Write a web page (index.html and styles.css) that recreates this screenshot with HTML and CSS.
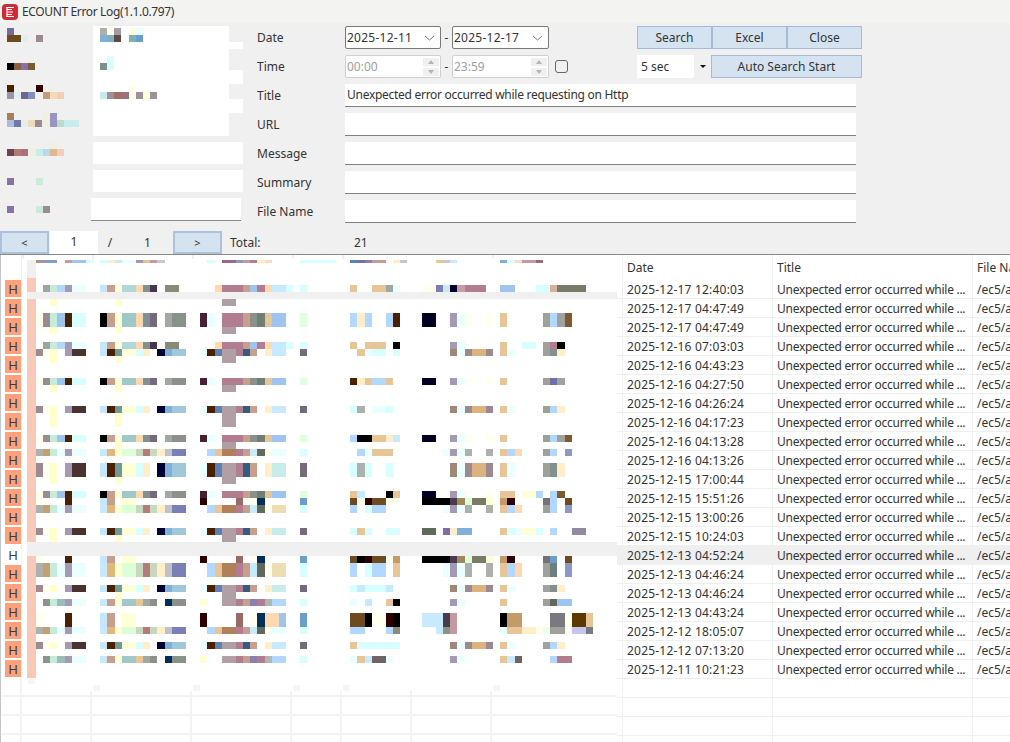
FILE: index.html
```html
<!DOCTYPE html>
<html>
<head>
  <title>ECOUNT Error Log</title>
  <link rel="stylesheet" href="styles.css">
</head>
<body>
  <div class="titlebar">
    <svg class="app-icon" width="16" height="16" viewBox="0 0 16 16">
      <rect x="0" y="0" width="16" height="16" rx="4" fill="#cf2a36"/>
      <path d="M4 3.5h8M5 5.5h5M5 8h6M5 10.5h5M4 12.5h8M5 3.5v9" stroke="#fff" stroke-width="1.2" fill="none"/>
    </svg>
    <span>ECOUNT Error Log(1.1.0.797)</span>
  </div>

  <div class="filters">
    <div class="side">
      <svg id="sideMosaic" class="side-mosaic" width="257" height="200" viewBox="0 26 257 200" shape-rendering="crispEdges"></svg>
      <div class="side-box"></div>
      <div class="side-box"></div>
      <div class="side-box side-box-last"></div>
    </div>
    <div class="filter-main">
      <div class="filter-row">
        <label class="filter-label">Date</label>
        <div class="combo">
          <span class="date-text">2025-12-11</span>
          <svg class="chevron" width="11" height="6" viewBox="0 0 11 6"><path d="M1 1l4.5 4L10 1" fill="none" stroke="#777"/></svg>
        </div>
        <span class="dash">-</span>
        <div class="combo combo-wide">
          <span class="date-text">2025-12-17</span>
          <svg class="chevron" width="11" height="6" viewBox="0 0 11 6"><path d="M1 1l4.5 4L10 1" fill="none" stroke="#777"/></svg>
        </div>
        <div class="btn-group">
          <button class="btn">Search</button>
          <button class="btn">Excel</button>
          <button class="btn">Close</button>
        </div>
      </div>
      <div class="filter-row">
        <label class="filter-label">Time</label>
        <div class="combo combo-off">
          <span>00:00</span>
          <div class="spin"><i class="spin-up"></i><i class="spin-down"></i></div>
        </div>
        <span class="dash">-</span>
        <div class="combo combo-wide combo-off">
          <span>23:59</span>
          <div class="spin"><i class="spin-up"></i><i class="spin-down"></i></div>
        </div>
        <div class="check"></div>
        <div class="interval">
          <span class="interval-text">5 sec</span>
          <span class="interval-arrow"><i></i></span>
        </div>
        <button class="btn btn-auto">Auto Search Start</button>
      </div>
      <div class="filter-row">
        <label class="filter-label">Title</label>
        <div class="field">Unexpected error occurred while requesting on Http</div>
      </div>
      <div class="filter-row">
        <label class="filter-label">URL</label>
        <div class="field"></div>
      </div>
      <div class="filter-row">
        <label class="filter-label">Message</label>
        <div class="field"></div>
      </div>
      <div class="filter-row">
        <label class="filter-label">Summary</label>
        <div class="field"></div>
      </div>
      <div class="filter-row">
        <label class="filter-label">File Name</label>
        <div class="field"></div>
      </div>
    </div>
  </div>

  <div class="pager">
    <button class="btn pager-btn">&lt;</button>
    <div class="pager-current">1</div>
    <span class="pager-slash">/</span>
    <span class="pager-total">1</span>
    <button class="btn pager-btn">&gt;</button>
    <span class="total-label">Total:</span>
    <span class="total-value">21</span>
  </div>

  <div class="grids">
    <div class="grid-left">
      <div id="hCol" class="h-col"></div>
      <div class="left-foot">
        <div></div><div></div><div></div><div></div><div></div><div></div><div></div><div></div>
        <div></div><div></div><div></div><div></div><div></div><div></div><div></div><div></div>
        <div></div><div></div><div></div><div></div><div></div><div></div><div></div><div></div>
        <div></div><div></div><div></div><div></div><div></div><div></div><div></div><div></div>
      </div>
      <svg id="gridMosaic" class="grid-mosaic" width="617" height="487" viewBox="0 255 617 487" shape-rendering="crispEdges"></svg>
    </div>
    <div id="gridRight" class="grid-right">
      <div class="log-row log-head">
        <div></div><div class="log-cell">Date</div><div class="log-cell">Title</div><div class="log-cell">File Name</div>
      </div>
    </div>
  </div>

  <script src="script.js"></script>
</body>
</html>
```

FILE: styles.css
```css
html, body {
  margin: 0;
  padding: 0;
}

body {
  width: 1010px;
  height: 742px;
  overflow: hidden;
  background: #f0f0f0;
  color: #333;
  font-family: "Noto Sans", "Liberation Sans", sans-serif;
  font-size: 12px;
}

button {
  font-family: inherit;
  font-size: 12px;
  color: #333;
}

.titlebar {
  display: flex;
  align-items: center;
  height: 23px;
  padding-left: 2px;
  letter-spacing: -0.36px;
  background: #f3f3f2;
}

.app-icon {
  margin-right: 4px;
}

.filters {
  display: flex;
  padding: 3px 0 8px;
}

.side {
  position: relative;
  box-sizing: border-box;
  width: 257px;
  padding-top: 116px;
}

.side-mosaic {
  position: absolute;
  top: 0;
  left: 0;
}

.side-box {
  position: relative;
  width: 150px;
  height: 22px;
  margin: 0 0 6px 93px;
  background: #fff;
}

.side-box-last {
  height: 22px;
  margin-left: 91px;
  margin-bottom: 0;
  border-bottom: 1px solid #8a8a8a;
}

.filter-row {
  display: flex;
  align-items: center;
  height: 23px;
  margin-bottom: 6px;
}

.filter-row:last-child {
  margin-bottom: 0;
}

.filter-label {
  width: 88px;
}

.combo {
  display: flex;
  align-items: center;
  justify-content: space-between;
  box-sizing: border-box;
  width: 96px;
  height: 23px;
  padding: 0 5px 0 1px;
  background: #fff;
  border: 1px solid #7a7a7a;
  border-radius: 2px;
}

.combo-wide {
  width: 97px;
}

.combo-off {
  padding-right: 1px;
  color: #a0a0a0;
  border-color: #cfcfcf;
}

.date-text {
  letter-spacing: 0.25px;
}

.dash {
  width: 11px;
  text-align: center;
}

.spin {
  display: flex;
  flex-direction: column;
  gap: 2px;
  width: 16px;
}

.spin i {
  display: block;
  position: relative;
  height: 8px;
  background: #f0f0f0;
}

.spin-up::after,
.spin-down::after {
  content: "";
  position: absolute;
  left: 5px;
  top: 2px;
  border-left: 3px solid transparent;
  border-right: 3px solid transparent;
}

.spin-up::after {
  border-bottom: 4px solid #b4b4b4;
}

.spin-down::after {
  border-top: 4px solid #b4b4b4;
}

.check {
  box-sizing: border-box;
  width: 13px;
  height: 13px;
  margin: 0 69px 0 6px;
  border: 1px solid #666;
  border-radius: 3px;
}

.btn-group {
  display: flex;
  margin-left: 88px;
}

.btn {
  box-sizing: border-box;
  width: 75px;
  height: 23px;
  padding: 0;
  background: #d5e3f1;
  border: 1px solid #a3bbd9;
}

.btn-auto {
  width: 151px;
}

.interval {
  display: flex;
  width: 74px;
  height: 23px;
  background: #fff;
}

.interval-text {
  flex: 1;
  padding-left: 4px;
  line-height: 23px;
}

.interval-arrow {
  display: flex;
  align-items: center;
  justify-content: center;
  width: 17px;
  background: #f0f0f0;
}

.interval-arrow i {
  border-left: 3px solid transparent;
  border-right: 3px solid transparent;
  border-top: 3px solid #111;
}

.field {
  box-sizing: border-box;
  width: 511px;
  height: 23px;
  padding-left: 2px;
  line-height: 22px;
  letter-spacing: -0.28px;
  background: #fff;
  border-bottom: 1px solid #808080;
}

.pager {
  display: flex;
  align-items: center;
  height: 23px;
  border-bottom: 1px solid #888;
}

.pager-btn {
  width: 49px;
  height: 23px;
  font-size: 11px;
  border-width: 2px;
  border-color: #aac2de;
}

.pager-current {
  width: 48px;
  height: 23px;
  margin-left: 1px;
  line-height: 21px;
  text-align: center;
  background: #fff;
}

.pager-slash {
  width: 24px;
  text-align: center;
}

.pager-total {
  width: 51px;
  text-align: center;
}

.total-label {
  width: 124px;
  margin-left: 8px;
}

.grids {
  display: flex;
  height: 487px;
  background: #fff;
}

.grid-left {
  position: relative;
  flex: 0 0 617px;
  box-sizing: border-box;
  border-left: 1px solid #c4c4cc;
}

.grid-mosaic {
  position: absolute;
  top: 0;
  left: -1px;
  pointer-events: none;
}

.h-col {
  width: 21px;
  height: 423px;
  padding-top: 25px;
  box-sizing: border-box;
  border-right: 1px solid #f0f0f0;
}

.h-cell {
  box-sizing: border-box;
  height: 19px;
  margin-left: 4px;
  padding-bottom: 2px;
  font-size: 13px;
  line-height: 18px;
  text-align: center;
  color: #3c3c3c;
}

.h-cell span {
  display: block;
  height: 17px;
  background: #ffa07a;
}

.h-cell-plain span {
  background: none;
}

.left-foot {
  display: grid;
  grid-template-columns: 21px 70px 100px 100px 50px 70px 80px 1fr;
  grid-auto-rows: 19px;
}

.left-foot div {
  border-right: 2px solid #f3f3f3;
  border-bottom: 2px solid #f3f3f3;
}

.left-foot div:nth-child(8n) {
  border-right: 0;
}

.grid-right {
  flex: 1;
  overflow: hidden;
}

.log-row {
  display: grid;
  grid-template-columns: 5px 150px 200px 240px;
  height: 19px;
  box-sizing: border-box;
  border-bottom: 1px solid #efefef;
  line-height: 20px;
  white-space: nowrap;
}

.log-head {
  height: 25px;
  border-bottom: 0;
  line-height: 25px;
}

.log-row-active {
  background: #efefef;
}

.log-cell {
  box-sizing: border-box;
  padding-left: 4px;
  overflow: hidden;
  border-left: 1px solid #efefef;
}

.log-date {
  letter-spacing: 0.2px;
}

.log-title {
  letter-spacing: -0.28px;
}
```

FILE: script.js
```js
// left grid H column and right log table
const hCol = document.getElementById('hCol');
for (let i = 0; i < 21; i++) {
  const cell = document.createElement('div');
  cell.className = i === 14 ? 'h-cell h-cell-plain' : 'h-cell';
  cell.innerHTML = '<span>H</span>';
  hCol.appendChild(cell);
}

const logDates = [
  '2025-12-17 12:40:03', '2025-12-17 04:47:49', '2025-12-17 04:47:49', '2025-12-16 07:03:03',
  '2025-12-16 04:43:23', '2025-12-16 04:27:50', '2025-12-16 04:26:24', '2025-12-16 04:17:23',
  '2025-12-16 04:13:28', '2025-12-16 04:13:26', '2025-12-15 17:00:44', '2025-12-15 15:51:26',
  '2025-12-15 13:00:26', '2025-12-15 10:24:03', '2025-12-13 04:52:24', '2025-12-13 04:46:24',
  '2025-12-13 04:46:24', '2025-12-13 04:43:24', '2025-12-12 18:05:07', '2025-12-12 07:13:20',
  '2025-12-11 10:21:23'
];
const gridRight = document.getElementById('gridRight');
function addLogRow(date, title, file, active) {
  const row = document.createElement('div');
  row.className = active ? 'log-row log-row-active' : 'log-row';
  row.innerHTML = '<div></div><div class="log-cell log-date">' + date + '</div><div class="log-cell log-title">' + title +
    '</div><div class="log-cell">' + file + '</div>';
  gridRight.appendChild(row);
}
logDates.forEach((date, i) => {
  addLogRow(date, 'Unexpected error occurred while ...', '/ec5/api/', i === 14);
});
for (let i = 0; i < 4; i++) {
  addLogRow('', '', '', false);
}

// blurred-out values, drawn as colour blocks
function addRect(svg, x, y, w, h, color) {
  const rect = document.createElementNS('http://www.w3.org/2000/svg', 'rect');
  rect.setAttribute('x', x);
  rect.setAttribute('y', y);
  rect.setAttribute('width', w);
  rect.setAttribute('height', h);
  rect.setAttribute('fill', color);
  svg.appendChild(rect);
}

const sideMosaic = document.getElementById('sideMosaic');
[
  [93, 26, 136, 110, '#fff'], [229, 42, 14, 7, '#fff'], [229, 70, 14, 14, '#fff'], [229, 99, 14, 14, '#fff'],
  [7, 28, 7, 7, '#7a6a9b'], [7, 35, 14, 7, '#6e4a20'], [21, 35, 7, 7, '#e0f0ee'], [36, 35, 7, 7, '#9c8a90'],
  [7, 63, 7, 7, '#000'], [14, 63, 7, 7, '#8a6040'], [21, 63, 7, 7, '#8a70a8'], [28, 63, 7, 7, '#7d5a30'],
  [7, 85, 7, 7, '#4a2000'], [36, 85, 7, 7, '#300000'], [7, 92, 7, 7, '#9a94ac'], [14, 92, 7, 7, '#e0f0ee'],
  [21, 92, 7, 7, '#706490'], [28, 92, 7, 7, '#8090c0'], [43, 92, 7, 7, '#c49a80'], [50, 92, 7, 7, '#f0dcb8'],
  [57, 92, 7, 7, '#f4ccb8'],
  [7, 113, 7, 7, '#a87d58'], [43, 113, 7, 14, '#f0f0e0'], [50, 113, 7, 14, '#9a94c0'], [7, 120, 7, 7, '#aebce0'],
  [14, 120, 7, 7, '#7078a8'], [21, 120, 7, 7, '#e0f0ee'], [28, 120, 7, 7, '#f0dcb8'], [35, 120, 7, 7, '#9c8a90'],
  [57, 120, 7, 7, '#b8dcc8'], [64, 120, 15, 7, '#c8ecec'],
  [7, 149, 7, 7, '#6e4450'], [14, 149, 7, 7, '#b07a70'], [21, 149, 7, 7, '#a87080'], [28, 149, 7, 7, '#f0f0e0'],
  [36, 149, 7, 7, '#c8ecec'], [43, 149, 7, 7, '#b8d8ec'], [50, 142, 7, 7, '#f0f0e0'], [50, 149, 7, 7, '#e0b890'],
  [57, 149, 7, 7, '#f4ccb8'],
  [7, 178, 7, 7, '#8a70a8'], [36, 178, 7, 7, '#c8ecd8'],
  [7, 206, 7, 7, '#8a70a8'], [36, 206, 7, 7, '#c8ecd8'], [43, 206, 7, 7, '#9c8a90'],
  [100, 28, 7, 7, '#b0b0a8'], [107, 28, 7, 7, '#fffff0'], [114, 28, 7, 7, '#a898a0'], [129, 28, 7, 7, '#ffffd8'],
  [136, 28, 7, 7, '#eaffff'], [100, 35, 7, 7, '#80b0d8'], [107, 35, 7, 7, '#7eb0c0'], [114, 35, 7, 7, '#5a4a40'],
  [129, 35, 7, 7, '#7eb0b0'], [136, 35, 7, 7, '#6a9ecc'],
  [107, 56, 7, 14, '#d8ffff'], [100, 63, 7, 7, '#809090'],
  [129, 85, 7, 14, '#ffffe8'], [100, 92, 7, 7, '#c8ecec'], [107, 92, 7, 7, '#a09098'], [114, 92, 7, 7, '#a07068'],
  [121, 92, 8, 7, '#a07080'], [136, 92, 7, 7, '#a09098'], [143, 92, 7, 7, '#ffffd8'], [150, 92, 7, 7, '#a09098']
].forEach(r => addRect(sideMosaic, r[0], r[1], r[2], r[3], r[4]));

const tan = '#e8c596', aqua = '#d8ffff', ice = '#eaffff', sky = '#b3d8ff', cream = '#ffeec8', ivory = '#fffff0';
const lilac = '#a49ab5', rose = '#b27d90', putty = '#b09fa5', stone = '#9fa09a', night = '#000022';
const umber = '#6e4a20', wine = '#300000', bark = '#4a2000', dust = '#9c8a90', pale = '#ffffd5', ash = '#aeb0ad';

// columns are (x - 36) / 7.143, each entry is [column, cells, colour]
const mid = [[2, 1, '#ffffcc'], [11, 1, '#ffffcc'], [26, 2, putty]];

function t0() {
  return [[1, 1, '#9da5a0'], [2, 1, '#c5ecd8'], [3, 1, sky], [4, 1, lilac], [5, 2, ice], [9, 1, '#c5e6fb'],
    [10, 1, '#c79f8c'], [11, 1, '#ffffd5'], [12, 2, '#b0d8d8'], [14, 1, '#ffd8b0'], [15, 1, '#829090'],
    [16, 1, '#4a3550'], [18, 2, '#8a8a78'], [25, 1, '#ffd8b0'], [26, 3, rose], [29, 1, '#c79f8c'],
    [30, 1, '#9dc5ef'], [31, 1, rose], [32, 1, '#ffd8b0'], [33, 2, '#c8eaff'], [35, 1, aqua], [37, 1, aqua]];
}
function t1(color) {
  return [[0, 1, dust], [1, 1, ivory], [2, 1, '#ffffcc'], [4, 1, lilac], [5, 2, '#4a3230'], [9, 1, '#c5e6fb'],
    [10, 1, bark], [11, 1, '#6f9a9a'], [12, 2, pale], [14, 1, aqua], [15, 1, cream], [17, 1, '#000033'],
    [18, 1, '#7fb0dc'], [19, 2, '#9fc8da'], [23, 1, ice], [24, 1, bark], [25, 1, '#5b80b5'], [26, 2, putty],
    [28, 1, rose], [29, 1, '#315d85'], [30, 1, '#c79f8c'], [32, 1, cream], [33, 2, color], [37, 1, '#75697b']];
}
function t2() {
  return [[1, 1, '#8a9590'], [2, 1, '#c5ecd8'], [3, 1, '#9dbbb8'], [4, 1, lilac], [5, 2, ice], [9, 1, '#c8e8fc'],
    [10, 1, '#c79f8c'], [11, 1, pale], [12, 2, '#9fc8c8'], [14, 1, tan], [15, 1, '#a0a8a4'], [16, 1, '#8a9188'],
    [18, 1, '#00305a'], [19, 2, '#8a9188'], [23, 1, pale], [26, 2, putty], [28, 1, rose], [29, 1, '#c79f8c'],
    [30, 1, '#8a80b0'], [31, 1, rose], [32, 1, '#aeb8b0'], [33, 2, sky], [37, 1, aqua]];
}
function t3() {
  return [[0, 1, ivory], [1, 1, dust], [2, 1, '#c5ecd8'], [3, 1, '#9dc5ef'], [4, 1, bark], [5, 2, aqua],
    [9, 1, '#000'], [10, 1, '#c79f8c'], [11, 1, pale], [12, 2, '#9fc8c8'], [14, 1, '#ffd8b0'], [15, 1, '#829090'],
    [16, 1, '#75697b'], [18, 1, '#a0a8a4'], [19, 2, '#8a9188'], [23, 1, '#4a2035'], [24, 1, ice], [26, 3, rose],
    [29, 1, '#c79f8c'], [30, 1, '#8a9188'], [31, 1, '#6f7f78'], [32, 1, tan], [33, 2, '#9dc5ef'], [37, 1, '#dfffdd']];
}
function t4(extra) {
  return [[0, 1, ivory], [4, 1, bark], [9, 1, '#c5e6fb'], [10, 1, '#c79f8c'], [12, 2, pale], [23, 1, wine],
    [28, 1, '#9b6a64'], [30, 1, ivory], [31, 1, '#00305a'], [37, 1, '#6b9fcb']].concat(extra || []);
}
function t5(color) {
  return [[0, 1, ash], [1, 1, '#c79f6f'], [2, 1, '#c5ecd8'], [3, 1, ice], [4, 1, lilac], [5, 2, ice],
    [9, 1, '#c8e8fc'], [10, 1, '#e0b87a'], [11, 1, pale], [12, 2, '#ddffd8'], [14, 1, '#c8d8c0'], [15, 1, '#b27d78'],
    [16, 1, '#c8d8c0'], [17, 1, cream], [18, 1, '#c0c0c8'], [19, 2, '#7a80b5'], [24, 1, sky], [25, 1, tan],
    [26, 2, '#b08058'], [28, 1, rose], [29, 1, '#c79f8c'], [30, 1, '#c8eaff'], [31, 1, '#5f6a5a'], [32, 1, ivory],
    [33, 2, color], [37, 1, aqua]];
}

const tailBrown = [[58, 1, '#a08878'], [59, 1, ice], [60, 1, dust], [61, 2, '#dcb27f'], [63, 1, dust], [65, 1, tan], [66, 1, ice]];
const tailLilac = [[58, 1, lilac], [59, 1, ice], [60, 1, ivory], [63, 1, ivory], [65, 1, tan]];
const tailAsh = [[57, 1, ice], [58, 1, lilac], [59, 1, ice], [60, 1, ash], [63, 1, ash], [65, 1, tan], [66, 1, sky], [67, 1, '#ffd8b0']];
const tailDark = [[54, 4, '#000'], [58, 1, '#4a3a50'], [59, 1, '#a08858'], [60, 1, '#ddffd8'], [61, 2, '#7a7a68'], [63, 1, pale], [65, 1, '#c49a68'], [66, 1, wine]];

const mosaicRows = [
  [285, 7, t0(), [[44, 1, tan], [47, 2, tan], [49, 1, '#a0a8a4'], [50, 1, ice], [54, 2, ivory], [56, 1, '#7a80b5'], [57, 1, '#c8ecec'], [58, 1, '#000033'], [59, 1, '#c79f9f'], [60, 3, rose], [65, 2, '#9dc5ef'], [70, 2, aqua], [72, 1, '#d8ae9c'], [73, 4, '#7a7a68']]],
  [299, 7, mid, []],
  [313, 14, t3(), [[44, 1, sky], [45, 1, cream], [46, 1, sky], [49, 1, sky], [50, 1, bark], [54, 2, night]].concat(tailLilac, [[71, 1, stone], [72, 1, sky], [73, 1, '#a0a39d'], [74, 1, '#7d5a30']])],
  [327, 7, mid, []],
  [342, 7, t0(), [[44, 1, tan], [46, 3, tan], [50, 1, '#000'], [58, 1, lilac], [59, 1, ice], [65, 1, tan], [68, 2, aqua], [71, 1, stone], [72, 1, rose], [73, 1, '#000']]],
  [349, 7, t1('#c8eaff'), [[45, 1, tan], [46, 1, ice], [47, 2, aqua], [50, 1, aqua]].concat(tailBrown, [[71, 1, stone], [72, 1, '#829090'], [73, 1, cream]])],
  [356, 7, mid, []],
  [378, 7, t3(), [[44, 1, bark], [45, 1, cream], [46, 1, tan], [47, 2, sky], [49, 1, tan], [54, 2, night]].concat(tailLilac, [[71, 1, stone], [72, 1, '#6c70a5'], [73, 1, '#a0a39d']])],
  [385, 7, mid, []],
  [406, 7, t1('#c8eaff'), [[44, 1, aqua], [45, 1, ash], [47, 2, ice], [49, 1, aqua]].concat(tailBrown, [[71, 1, stone], [72, 1, sky], [73, 1, cream]])],
  [413, 14, [[2, 1, '#ffffcc'], [11, 1, '#ffffcc'], [26, 2, putty]], []],
  [435, 7, t3(), [[44, 1, sky], [45, 2, '#000'], [47, 2, tan], [49, 1, cream], [50, 1, '#c8eaff'], [54, 2, night]].concat(tailLilac, [[71, 1, stone], [72, 1, sky], [73, 1, '#a0a39d'], [74, 1, '#7d5a30']])],
  [442, 7, [[11, 1, '#ffffcc'], [26, 2, putty]], []],
  [449, 7, t5('#eaffff'), [[45, 1, sky], [46, 1, ice], [47, 3, tan]].concat(tailAsh, [[71, 1, stone], [72, 1, sky], [74, 1, '#8a9ac8']])],
  [463, 14, t1('#c8ecec'), [[44, 1, aqua], [45, 1, ash], [46, 1, aqua], [49, 1, aqua]].concat(tailBrown, [[71, 1, stone], [72, 1, '#829090'], [73, 1, cream]])],
  [477, 7, mid, []],
  [491, 7, t3(), [[44, 1, tan], [45, 1, '#c8eaff'], [49, 1, '#000'], [50, 1, tan], [54, 2, night], [58, 1, lilac], [59, 1, ice], [60, 1, ivory], [63, 1, ivory], [65, 2, tan], [68, 2, pale], [70, 1, sky], [72, 1, sky], [73, 1, '#7d5a30']]],
  [498, 7, t4(), [[44, 1, umber], [45, 1, ivory], [46, 1, wine], [47, 2, umber], [49, 2, ivory]].concat(tailDark, [[71, 1, '#75707a'], [72, 1, sky], [74, 1, umber]])],
  [505, 8, t5('#eedcb5'), [[44, 1, sky], [46, 1, aqua], [47, 2, sky]].concat(tailAsh, [[71, 1, stone], [72, 1, sky], [74, 1, '#8a9ac8']])],
  [528, 7, t1('#c8ecec'), [[44, 1, aqua], [45, 1, tan], [46, 1, aqua], [49, 2, aqua], [54, 2, '#5f6a5a'], [57, 1, '#7a6fa0'], [58, 1, cream], [59, 2, '#7fb0dc'], [65, 1, tan], [66, 1, aqua], [67, 1, ice], [68, 2, pale], [70, 1, aqua], [72, 1, sky], [75, 2, '#928ba0']]],
  [535, 7, mid, []],
  [556, 7, t4(), [[44, 1, umber], [45, 1, '#000'], [46, 1, wine], [47, 2, umber], [49, 1, ivory], [50, 1, '#c49a68']].concat(tailDark, [[71, 1, '#75707a'], [72, 1, '#6b9fcb'], [74, 1, umber]])],
  [563, 14, t5('#eedcb5'), [[44, 1, sky], [46, 1, aqua], [47, 2, sky], [50, 1, tan]].concat(tailAsh, [[71, 1, stone], [72, 1, '#6f7f7d'], [74, 1, '#8a9ac8']])],
  [585, 7, t1('#c8ecec'), [[44, 1, aqua], [45, 1, '#c8eaff'], [46, 3, aqua], [49, 1, '#c8eaff']].concat(tailBrown, [[71, 1, '#a0a39d'], [72, 1, '#829090'], [73, 1, cream]])],
  [592, 7, [[11, 1, '#ffffcc'], [26, 2, putty]], []],
  [599, 7, t2(), [[44, 1, ice], [46, 1, '#c8eaff'], [49, 1, tan], [50, 1, '#000'], [58, 1, lilac], [59, 1, ice], [65, 1, tan], [71, 1, stone], [72, 1, '#5f6a5a'], [73, 2, '#9dc5ef']]],
  [613, 14, t4([[32, 2, '#ffd8b0'], [34, 1, '#9dc5ef']]), [[44, 2, umber], [46, 1, '#000'], [47, 2, ivory], [49, 1, wine], [50, 1, '#000'], [54, 3, '#c8eaff'], [57, 1, '#4a3a50'], [58, 1, '#c49aa0'], [65, 1, '#000'], [66, 2, '#c49a68'], [72, 2, '#7a7880'], [74, 1, ivory], [75, 2, '#5f3800'], [77, 1, tan]]],
  [627, 7, t5('#eaffff'), [[44, 2, sky], [49, 1, sky], [50, 1, '#8a8a78'], [56, 1, '#c8eaff'], [57, 1, '#8a9188'], [58, 1, '#c49aa0'], [65, 1, ice], [66, 2, tan], [68, 2, cream], [70, 1, ivory], [71, 1, '#eeffee'], [72, 2, stone], [75, 2, '#c8c5ec'], [77, 1, '#7a7880']]],
  [642, 7, t1('#c8eaff'), [[44, 1, tan], [45, 6, aqua]].concat(tailBrown, [[71, 1, '#a0a39d'], [72, 1, sky], [73, 1, cream]])],
  [656, 7, t2(), [[44, 1, ice], [45, 1, tan], [46, 1, '#c8eaff'], [47, 2, '#6e6464'], [49, 1, ice], [58, 1, lilac], [59, 1, ice], [65, 1, tan], [66, 1, '#c8eaff'], [67, 1, '#6e6464'], [72, 1, sky], [73, 2, rose]]]
];

const headStrip = [
  [0, 1, '#b09090'], [1, 2, '#8a9ac8'], [4, 1, '#c79f8c'], [5, 2, '#9dc5ef'], [7, 1, aqua], [9, 1, aqua], [10, 1, cream],
  [11, 1, '#c8eaff'], [12, 2, ice], [14, 1, lilac], [15, 1, '#d8c896'], [16, 1, '#c49aa0'], [17, 1, '#c8c8c8'], [24, 1, aqua],
  [26, 2, '#9b6a80'], [28, 1, '#8a9ac8'], [29, 1, '#c49aa0'], [30, 1, rose], [31, 1, cream], [32, 1, '#ffd8c8'], [37, 1, aqua],
  [38, 4, aqua], [44, 1, '#5b80b5'], [45, 1, '#7a6fa0'], [46, 1, '#8a80b0'], [47, 2, '#c49aa0'], [50, 1, cream], [51, 1, '#c8c8c8'],
  [56, 1, tan], [57, 1, '#c8c8c8'], [58, 1, '#c8eaff'], [65, 1, '#7fb0dc'], [66, 1, aqua], [67, 1, '#ffd8c8'], [68, 2, '#c49aa0'], [70, 1, '#9b6a80']
];

const gridMosaic = document.getElementById('gridMosaic');

// footer cover, selected bands and the pink marker column
addRect(gridMosaic, 24, 678, 593, 13, '#fff');
[[28, 678], [93, 685], [193, 685], [293, 685], [343, 685], [493, 685]].forEach(p => {
  addRect(gridMosaic, p[0], p[1], 7, 6, '#f5f5f5');
});
[22, 92, 192, 292, 342, 492].forEach(x => addRect(gridMosaic, x, 255, 2, 4, '#f0f0f0'));
addRect(gridMosaic, 27, 260, 9, 18, '#f0f0f0');
addRect(gridMosaic, 27, 278, 9, 400, '#f8c8b8');
addRect(gridMosaic, 27, 292, 590, 7, '#f0f0f0');
addRect(gridMosaic, 27, 542, 590, 14, '#f0f0f0');

function drawCells(y, h, cells) {
  cells.forEach(c => {
    const x = Math.round(36 + c[0] * 50 / 7);
    const end = Math.round(36 + (c[0] + c[1]) * 50 / 7);
    addRect(gridMosaic, x, y, end - x, h, c[2]);
  });
}
drawCells(260, 3, headStrip);
mosaicRows.forEach(r => {
  drawCells(r[0], r[1], r[2]);
  drawCells(r[0], r[1], r[3]);
});
```
